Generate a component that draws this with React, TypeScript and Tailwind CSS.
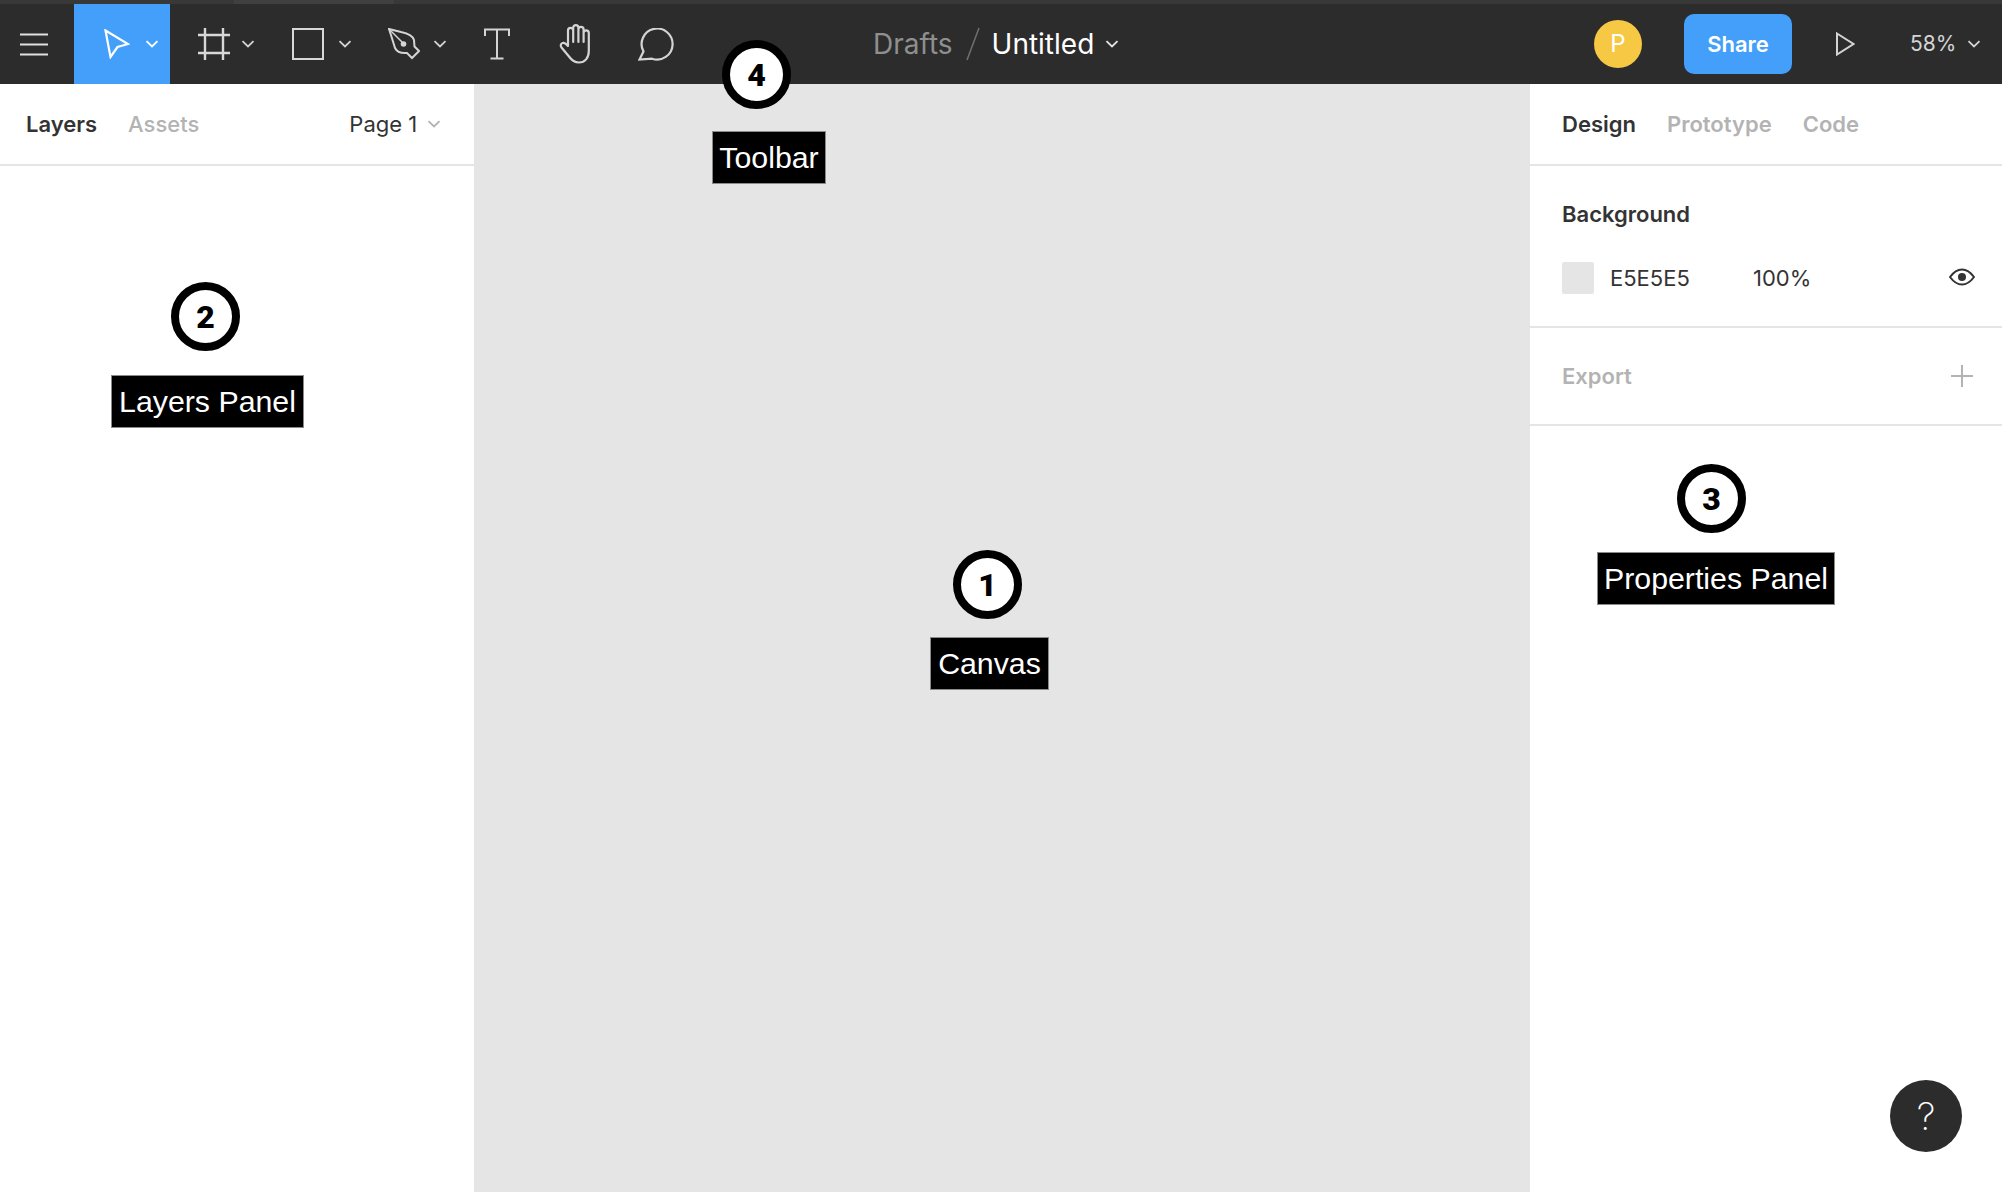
const Chevron = ({ c = "#d4d4d4", className = "" }: { c?: string; className?: string }) => (
  <svg width="14" height="8" viewBox="0 0 14 8" className={className} fill="none">
    <path d="M1.5 1.2 L7 6.5 L12.5 1.2" stroke={c} strokeWidth="1.8" />
  </svg>
);

const Marker = ({ n, label, circle, box }: { n: string; label: string; circle: string; box: string }) => (
  <>
    <div className={`absolute flex h-[69px] w-[69px] items-center justify-center rounded-full border-[8px] border-black bg-white text-[32px] font-black text-black [font-family:Roboto,sans-serif] ${circle}`}>
      {n}
    </div>
    <div className={`absolute flex h-[53px] items-center justify-center border border-[#8a8a8a] bg-black pt-[1px] text-[30.3px] text-white [font-family:'Liberation_Sans',sans-serif] ${box}`}>
      {label}
    </div>
  </>
);

export default function App() {
  return (
    <div className="relative flex h-[1192px] w-[2002px] flex-col overflow-hidden bg-white [font-family:Inter,sans-serif]">
      <div className="flex h-[4px] shrink-0 bg-[#383838]">
        <div className="ml-[234px] h-full w-[160px] bg-[#404040]" />
      </div>
      <header className="flex h-[80px] shrink-0 items-center bg-[#2c2c2c]">
        <div className="flex h-full w-[74px] items-center justify-center pr-[6px]">
          <svg width="28" height="23" viewBox="0 0 28 23" fill="none" stroke="#e0e0e0" strokeWidth="2.2">
            <path d="M0 1.5H28M0 11.5H28M0 21.5H28" />
          </svg>
        </div>
        <div className="flex h-full w-[96px] items-center bg-[#439ffa]">
          <svg className="ml-[30px]" width="26" height="30" viewBox="0 0 26 30" fill="none" stroke="#fff" strokeWidth="2.2">
            <path d="M1.5 1.5 L24 15 L13.5 18 L6.5 28 Z" />
          </svg>
          <Chevron c="#fff" className="ml-[15px]" />
        </div>
        <svg className="ml-[28px]" width="32" height="32" viewBox="0 0 32 32" fill="none" stroke="#d8d8d8" strokeWidth="2.4">
          <path d="M7 0V32M25 0V32M0 7H32M0 25H32" />
        </svg>
        <Chevron className="ml-[11px]" />
        <div className="ml-[37px] h-[32px] w-[32px] border-2 border-[#d8d8d8]" />
        <Chevron className="ml-[14px]" />
        <svg className="ml-[36px]" width="32" height="32" viewBox="0 0 32 32" fill="none" stroke="#d4d4d4" strokeWidth="2">
          <path d="M1 1 L13 4 C20 5.5 25 8 26 12 L26.5 18.5 L31 23 L24 30 L19 25 C14 25.5 9 24 7 20 C5.5 15 3 7 1 1 Z" />
          <path d="M1 1 L15 15" strokeWidth="1.5" />
          <circle cx="15.5" cy="16" r="2.8" fill="#d4d4d4" stroke="none" />
        </svg>
        <Chevron className="ml-[13px]" />
        <svg className="ml-[37px]" width="26" height="32" viewBox="0 0 26 32" fill="none" stroke="#d4d4d4" strokeWidth="2">
          <path d="M1 8V1.5H25V8M13 1.5V30.5M6.5 30.5H19.5" />
        </svg>
        <svg className="ml-[49px]" width="37" height="40" viewBox="0 0 37 40" fill="none" stroke="#d4d4d4" strokeWidth="2.2" strokeLinecap="round" strokeLinejoin="round">
          <path d="M9 22V6.5a2.6 2.6 0 0 1 5.2 0V18M14.2 18V3.7a2.6 2.6 0 0 1 5.2 0V18M19.4 18V5.5a2.6 2.6 0 0 1 5.2 0V18M24.6 18V9a2.6 2.6 0 0 1 5.2 0V27C29.8 34 26 38.5 20 38.5C15 38.5 12.5 36 10 32.5L2.5 23.5C1 21.5 2 19.5 3.5 19C5.5 18.2 7 19.5 9 22" />
        </svg>
        <svg className="ml-[42px]" width="36" height="33" viewBox="0 0 36 33" fill="none" stroke="#d4d4d4" strokeWidth="2.2">
          <path d="M1.5 31.5 L5.5 23.5 A15.5 15.5 0 1 1 14 30.7 Z" />
        </svg>
        <div className="ml-[199px] flex items-center">
          <span className="text-[28px] text-[#8f8f8f]">Drafts</span>
          <svg className="ml-[12px]" width="16" height="34" viewBox="0 0 16 34" fill="none" stroke="#6f6f6f" strokeWidth="1.6">
            <path d="M14 1L2 33" />
          </svg>
          <span className="ml-[11px] text-[28px] text-white">Untitled</span>
          <Chevron c="#e6e6e6" className="ml-[11px]" />
        </div>
        <div className="ml-auto flex h-[48px] w-[48px] items-center justify-center rounded-full bg-[#f7c844] text-[24px] text-white">P</div>
        <div className="ml-[42px] flex h-[60px] w-[108px] items-center justify-center rounded-[10px] bg-[#439ffa] text-[22px] font-semibold text-white">Share</div>
        <svg className="ml-[44px]" width="19" height="24" viewBox="0 0 19 24" fill="none" stroke="#d4d4d4" strokeWidth="2">
          <path d="M1 1.5 L17.5 12 L1 22.5 Z" />
        </svg>
        <span className="ml-[55px] w-[45px] whitespace-nowrap text-right text-[21px] text-[#d4d4d4]">58%</span>
        <Chevron className="ml-[12px] mr-[21px]" />
      </header>
      <main className="flex min-h-0 flex-1">
        <aside className="w-[474px] shrink-0 bg-white">
          <div className="flex h-[82px] items-center border-b-2 border-[#e5e5e5] pl-[26px] text-[22px]">
            <span className="font-semibold text-[#333]">Layers</span>
            <span className="ml-[31px] font-medium text-[#b3b3b3]">Assets</span>
            <span className="ml-[150px] text-[#333]">Page 1</span>
            <Chevron c="#b3b3b3" className="ml-[10px]" />
          </div>
        </aside>
        <div className="flex-1 bg-[#e5e5e5]" />
        <aside className="w-[472px] shrink-0 bg-white">
          <div className="flex h-[82px] items-center border-b-2 border-[#e5e5e5] pl-[32px] text-[22px]">
            <span className="font-semibold text-[#333]">Design</span>
            <span className="ml-[31px] font-semibold text-[#b3b3b3]">Prototype</span>
            <span className="ml-[31px] font-semibold text-[#b3b3b3]">Code</span>
          </div>
          <div className="h-[162px] border-b-2 border-[#e5e5e5] px-[32px]">
            <div className="pt-[35px] text-[22px] font-semibold leading-[26px] text-[#333]">Background</div>
            <div className="mt-[35px] flex h-[32px] items-center text-[22px] text-[#333]">
              <div className="h-[32px] w-[32px] rounded-[2px] bg-[#e5e5e5]" />
              <span className="ml-[16px] w-[143px]">E5E5E5</span>
              <span>100%</span>
              <svg className="ml-auto mr-[-5px] mt-[-2px]" width="26" height="18" viewBox="0 0 26 18" fill="none" stroke="#333" strokeWidth="2">
                <path d="M1 9 C5 3.5 9 1.5 13 1.5 C17 1.5 21 3.5 25 9 C21 14.5 17 16.5 13 16.5 C9 16.5 5 14.5 1 9 Z" />
                <circle cx="13" cy="9" r="4" fill="#333" stroke="none" />
              </svg>
            </div>
          </div>
          <div className="flex h-[98px] items-center justify-between border-b-2 border-[#e5e5e5] px-[32px]">
            <span className="text-[22px] font-semibold text-[#b3b3b3]">Export</span>
            <svg className="mr-[-3px]" width="22" height="22" viewBox="0 0 22 22" fill="none" stroke="#b3b3b3" strokeWidth="2">
              <path d="M11 0V22M0 11H22" />
            </svg>
          </div>
        </aside>
      </main>
      <Marker n="1" label="Canvas" circle="left-[953px] top-[550px]" box="left-[930px] top-[637px] w-[119px]" />
      <Marker n="2" label="Layers Panel" circle="left-[171px] top-[282px]" box="left-[111px] top-[375px] w-[193px]" />
      <Marker n="3" label="Properties Panel" circle="left-[1677px] top-[464px]" box="left-[1597px] top-[552px] w-[238px]" />
      <Marker n="4" label="Toolbar" circle="left-[722px] top-[40px]" box="left-[712px] top-[131px] w-[114px]" />
      <div className="absolute left-[1890px] top-[1080px] flex h-[72px] w-[72px] items-center justify-center rounded-full bg-[#2c2c2c] text-[38px] font-extralight text-white">?</div>
    </div>
  );
}
